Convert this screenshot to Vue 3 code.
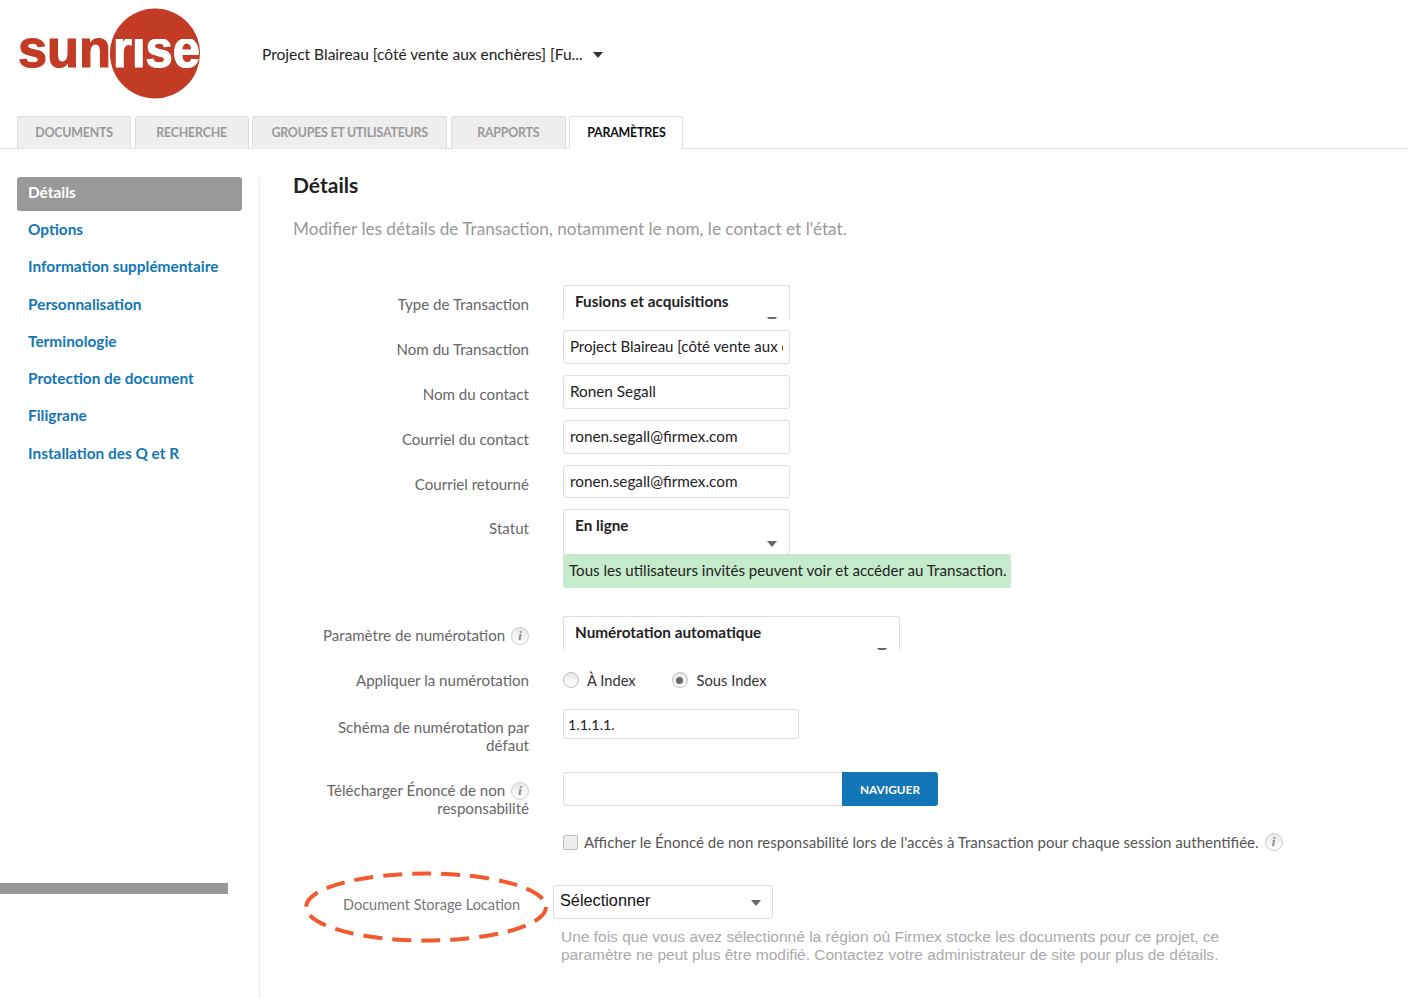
<script setup>
const tabs = [
  { label: 'DOCUMENTS', w: 114 },
  { label: 'RECHERCHE', w: 114 },
  { label: 'GROUPES ET UTILISATEURS', w: 195 },
  { label: 'RAPPORTS', w: 115 },
  { label: 'PARAMÈTRES', w: 114, active: true }
]
const nav = ['Options', 'Information supplémentaire', 'Personnalisation', 'Terminologie', 'Protection de document', 'Filigrane', 'Installation des Q et R']
</script>

<template>
  <div class="page">
    <header class="top">
      <svg class="logo" width="185" height="92" viewBox="0 0 185 92">
        <defs>
          <clipPath id="riseClip"><rect x="90" y="31" width="95" height="40" /></clipPath>
        </defs>
        <circle cx="138" cy="45.5" r="45" fill="#c23b24" />
        <text class="logo-text" x="1" y="59" fill="#c23b24" stroke="#c23b24" textLength="93" lengthAdjust="spacingAndGlyphs">sun</text>
        <text class="logo-text" x="96" y="59" fill="#fff" stroke="#fff" textLength="87" lengthAdjust="spacingAndGlyphs" clip-path="url(#riseClip)">rise</text>
      </svg>
      <div class="project">Project Blaireau [côté vente aux enchères] [Fu...</div>
      <span class="project-caret"></span>
    </header>

    <nav class="tabs">
      <div v-for="t in tabs" :key="t.label" class="tab" :class="{ active: t.active }" :style="{ width: t.w + 'px' }">{{ t.label }}</div>
    </nav>

    <div class="body">
      <aside class="side">
        <div class="side-nav">
          <div class="side-active">Détails</div>
          <a v-for="n in nav" :key="n" class="side-link">{{ n }}</a>
        </div>
        <div class="side-bar"></div>
      </aside>

      <main class="main">
        <h1 class="title">Détails</h1>
        <p class="sub">Modifier les détails de Transaction, notamment le nom, le contact et l'état.</p>

        <div class="form">
          <div class="row">
            <label class="lab">Type de Transaction</label>
            <div class="sel clip w227"><span>Fusions et acquisitions</span><i class="caret"></i></div>
          </div>
          <div class="row">
            <label class="lab">Nom du Transaction</label>
            <input class="inp w227 narrow" value="Project Blaireau [côté vente aux enchères] [Fusions]" />
          </div>
          <div class="row">
            <label class="lab">Nom du contact</label>
            <input class="inp w227" value="Ronen Segall" />
          </div>
          <div class="row">
            <label class="lab">Courriel du contact</label>
            <input class="inp w227" value="ronen.segall@firmex.com" />
          </div>
          <div class="row">
            <label class="lab">Courriel retourné</label>
            <input class="inp w227 h33" value="ronen.segall@firmex.com" />
          </div>
          <div class="row">
            <label class="lab">Statut</label>
            <div class="stack">
              <div class="sel tall w227"><span>En ligne</span><i class="caret"></i></div>
              <div class="note">Tous les utilisateurs invités peuvent voir et accéder au Transaction.</div>
            </div>
          </div>

          <div class="row gap28">
            <label class="lab">Paramètre de numérotation <i class="info">i</i></label>
            <div class="sel clip w337 num"><span>Numérotation automatique</span><i class="caret"></i></div>
          </div>
          <div class="row radios-row">
            <label class="lab">Appliquer la numérotation</label>
            <div class="radios">
              <span class="radio"></span><span class="radio-text first">À Index</span>
              <span class="radio on"></span><span class="radio-text">Sous Index</span>
            </div>
          </div>
          <div class="row schema">
            <label class="lab">Schéma de numérotation par défaut</label>
            <input class="inp small" value="1.1.1.1." />
          </div>
          <div class="row upload">
            <label class="lab">Télécharger Énoncé de non <i class="info">i</i> responsabilité</label>
            <div class="file">
              <div class="file-box"></div>
              <button class="browse">NAVIGUER</button>
            </div>
          </div>
          <div class="row check-row">
            <span></span>
            <div class="check-wrap">
              <span class="check"></span>
              <span class="check-text">Afficher le Énoncé de non responsabilité lors de l'accès à Transaction pour chaque session authentifiée.</span>
              <i class="info">i</i>
            </div>
          </div>

          <div class="storage">
            <svg class="ring" width="248" height="75" viewBox="0 0 248 75">
              <ellipse cx="124" cy="37" rx="120" ry="33.5" fill="none" stroke="#f05a2c" stroke-width="4" stroke-dasharray="19 10" />
            </svg>
            <div class="storage-label">Document Storage Location</div>
            <div class="storage-field">
              <div class="storage-sel">Sélectionner<i class="caret small-caret"></i></div>
              <p class="help">Une fois que vous avez sélectionné la région où Firmex stocke les documents pour ce projet, ce paramètre ne peut plus être modifié. Contactez votre administrateur de site pour plus de détails.</p>
            </div>
          </div>
        </div>
      </main>
    </div>
  </div>
</template>

<style>
html, body { margin: 0; background: #fff; }
</style>

<style scoped>
.page {
  width: 1408px;
  height: 998px;
  overflow: hidden;
  font-family: Lato, "Noto Sans", sans-serif;
  font-size: 15.1px;
  color: #222;
  background: #fff;
}
.top {
  height: 116px;
  display: flex;
  align-items: flex-start;
  padding-left: 17px;
  box-sizing: border-box;
}
.logo { margin-top: 8px; flex: none; }
.logo-text { font-family: "Liberation Sans", sans-serif; font-weight: 700; font-size: 51px; stroke-width: 1.2px; }
.project { margin: 44px 0 0 60px; font-size: 15.5px; line-height: 20px; color: #222; width: 323px; white-space: nowrap; }
.project-caret {
  margin: 52px 0 0 8px;
  border-left: 5px solid transparent;
  border-right: 5px solid transparent;
  border-top: 6px solid #333;
}
.tabs {
  height: 33px;
  box-sizing: border-box;
  display: flex;
  gap: 3.6px;
  padding-left: 17px;
  border-bottom: 1px solid #ddd;
}
.tab {
  height: 33px;
  box-sizing: border-box;
  background: #eee;
  border: 1px solid #ddd;
  border-bottom: none;
  border-radius: 3px 3px 0 0;
  color: #999;
  font-size: 12.4px;
  letter-spacing: -0.2px;
  font-weight: 700;
  text-align: center;
  line-height: 31px;
  white-space: nowrap;
}
.tab.active { background: #fff; color: #111; height: 33px; position: relative; z-index: 1; }
.body { display: flex; height: 849px; }
.side {
  width: 260px;
  flex: none;
  box-sizing: border-box;
  border-right: 1px solid #eee;
  margin-top: 28px;
  display: flex;
  flex-direction: column;
}
.side-nav { padding-left: 17px; display: flex; flex-direction: column; font-size: 15.4px; }
.side-active {
  width: 225px;
  height: 34px;
  box-sizing: border-box;
  background: #999;
  border-radius: 3px;
  color: #fff;
  font-weight: 700;
  padding-left: 11px;
  line-height: 31px;
}
.side-link {
  padding-left: 11px;
  height: 37.25px;
  line-height: 37.25px;
  color: #1276b6;
  font-weight: 700;
  white-space: nowrap;
}
.side-bar { margin-top: 411px; width: 228px; height: 11px; background: #999; }
.main { flex: 1; padding-left: 33px; min-width: 0; }
.title { margin: 22px 0 0; font-size: 21px; line-height: 28px; font-weight: 700; color: #222; }
.sub { margin: 17px 0 0; font-size: 17.2px; line-height: 26px; color: #999; white-space: nowrap; }
.form { margin-top: 43px; display: flex; flex-direction: column; gap: 11px; }
.row { display: grid; grid-template-columns: 236px 1fr; column-gap: 34px; align-items: start; }
.lab { text-align: right; color: #666; line-height: 18px; padding-top: 9.5px; }
.w227 { width: 227px; }
.w337 { width: 337px; }
.inp {
  height: 34px;
  box-sizing: border-box;
  border: 1px solid #ddd;
  border-radius: 3px;
  padding: 0 6px 2px;
  font: inherit;
  font-size: 15.3px;
  color: #222;
  background: #fff;
  outline: none;
  display: block;
}
.narrow { font-size: 15px; }
.h33 { height: 33px; }
.small { width: 236px; height: 30px; padding: 0 4px; font-size: 14.3px; }
.sel {
  position: relative;
  box-sizing: border-box;
  border: 1px solid #ddd;
  border-radius: 3px;
  padding: 0 11px;
  line-height: 17px;
  font-size: 15.3px;
  font-weight: 700;
  color: #222;
  overflow: hidden;
  background: #fff;
}
.sel span { display: block; padding-top: 7px; }
.clip { height: 34px; border-bottom: none; border-radius: 3px 3px 0 0; }
.tall { height: 46px; }
.caret {
  position: absolute;
  right: 12px;
  top: 31px;
  border-left: 5.5px solid transparent;
  border-right: 5.5px solid transparent;
  border-top: 6px solid #666;
}
.stack { display: flex; flex-direction: column; }
.note {
  margin-top: -1px;
  position: relative;
  width: 448px;
  height: 34px;
  box-sizing: border-box;
  background: #c6ebcc;
  border-radius: 3px;
  padding-left: 6px;
  line-height: 33px;
  color: #222;
  white-space: nowrap;
}
.gap28 { margin-top: 17px; }
.info {
  display: inline-block;
  width: 18px;
  height: 18px;
  margin: -3px 0 -3px 2px;
  box-sizing: border-box;
  border: 1px solid #ccc;
  border-radius: 50%;
  text-align: center;
  font: italic 700 13px/16px "Liberation Serif", serif;
  color: #888;
  vertical-align: 1px;
  background: linear-gradient(#e8e8e8, #fff);
}
.radios-row { margin-top: 0; }
.radios { display: flex; align-items: center; padding-top: 10px; font-size: 14.7px; color: #333; line-height: 18px; }
.radio {
  width: 16px;
  height: 16px;
  box-sizing: border-box;
  border: 1px solid #bbb;
  border-radius: 50%;
  background: linear-gradient(#e8e8e8, #fff);
  display: flex;
  align-items: center;
  justify-content: center;
}
.radio.on::after { content: ""; width: 7px; height: 7px; border-radius: 50%; background: #666; }
.radio-text { margin-left: 8px; }
.radio-text.first { margin-right: 36px; }
.radio.on + .radio-text { margin-left: 9px; }
.schema { margin-top: 9px; }
.schema .lab { padding-top: 9px; }
.upload { margin-top: 7px; }
.upload .lab { padding-top: 9px; }
.file { display: flex; }
.file-box { width: 279px; height: 34px; box-sizing: border-box; border: 1px solid #ddd; border-right: none; border-radius: 3px 0 0 3px; }
.browse {
  width: 96px;
  height: 34px;
  border: none;
  background: #1276b6;
  color: #fff;
  border-radius: 0 3px 3px 0;
  font: 700 11.8px Lato, sans-serif;
  padding: 0;
}
.check-row { margin-top: 5px; }
.check-wrap { display: flex; align-items: center; color: #555; font-size: 15.05px; white-space: nowrap; line-height: 18px; }
.check {
  width: 15px;
  height: 15px;
  box-sizing: border-box;
  border: 1px solid #bbb;
  border-radius: 2px;
  background: #eee;
  margin-right: 6px;
}
.check-wrap .info { margin-left: 6px; }
.storage { position: relative; margin-top: 16px; display: flex; align-items: flex-start; }
.ring { position: absolute; left: 9px; top: -8px; }
.storage-label {
  margin: 18px 0 0 50px;
  width: 210px;
  font-size: 14.5px;
  line-height: 18px;
  color: #777;
  white-space: nowrap;
}
.storage-field { width: 680px; }
.storage-sel {
  position: relative;
  width: 220px;
  height: 34px;
  box-sizing: border-box;
  border: 1px solid #ddd;
  border-radius: 3px;
  padding-left: 6px;
  font-family: "Liberation Sans", sans-serif;
  font-size: 16.3px;
  line-height: 29px;
  color: #111;
  margin-top: 7px;
}
.small-caret { top: 14px; right: 11px; }
.help {
  margin: 9px 0 0 8px;
  font-family: "Liberation Sans", sans-serif;
  font-size: 15.5px;
  line-height: 18px;
  color: #aaa;
}
</style>
